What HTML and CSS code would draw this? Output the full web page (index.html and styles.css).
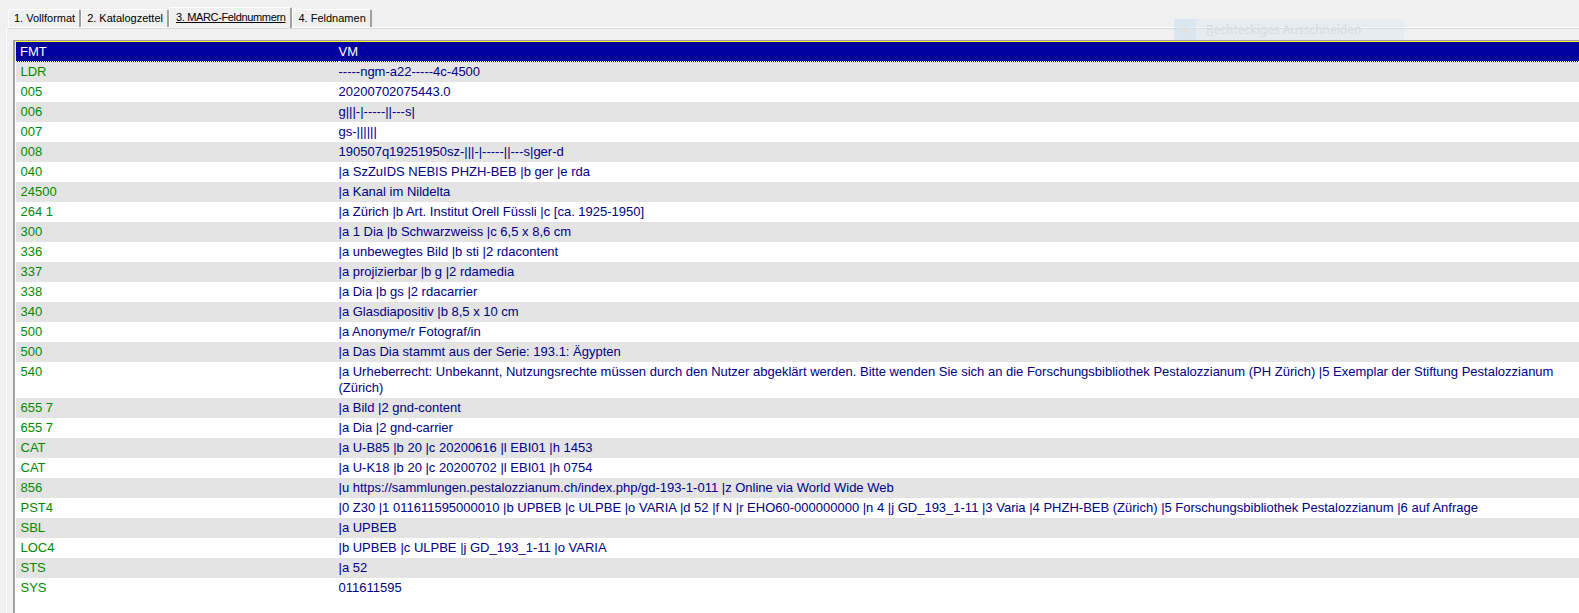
FILE: index.html
```html
<!DOCTYPE html>
<html>
<head>
<meta charset="utf-8">
<link rel="stylesheet" href="styles.css">
</head>
<body>
<div class="tabs">
  <div class="tab">1. Vollformat</div>
  <div class="tab">2. Katalogzettel</div>
  <div class="tab active"><span class="focus">3. MARC-Feldnummern</span></div>
  <div class="tab">4. Feldnamen</div>
</div>
<div class="panel">
  <div class="grid">
    <table class="marc">
      <thead>
        <tr class="head"><th class="c1">FMT</th><th class="c2">VM</th></tr>
      </thead>
      <tbody>
        <tr><td class="c1">LDR</td><td class="c2">-----ngm-a22-----4c-4500</td></tr>
        <tr><td class="c1">005</td><td class="c2">20200702075443.0</td></tr>
        <tr><td class="c1">006</td><td class="c2">g|||-|-----||---s|</td></tr>
        <tr><td class="c1">007</td><td class="c2">gs-||||||</td></tr>
        <tr><td class="c1">008</td><td class="c2">190507q19251950sz-|||-|-----||---s|ger-d</td></tr>
        <tr><td class="c1">040</td><td class="c2">|a SzZuIDS NEBIS PHZH-BEB |b ger |e rda</td></tr>
        <tr><td class="c1">24500</td><td class="c2">|a Kanal im Nildelta</td></tr>
        <tr><td class="c1">264 1</td><td class="c2">|a Zürich |b Art. Institut Orell Füssli |c [ca. 1925-1950]</td></tr>
        <tr><td class="c1">300</td><td class="c2">|a 1 Dia |b Schwarzweiss |c 6,5 x 8,6 cm</td></tr>
        <tr><td class="c1">336</td><td class="c2">|a unbewegtes Bild |b sti |2 rdacontent</td></tr>
        <tr><td class="c1">337</td><td class="c2">|a projizierbar |b g |2 rdamedia</td></tr>
        <tr><td class="c1">338</td><td class="c2">|a Dia |b gs |2 rdacarrier</td></tr>
        <tr><td class="c1">340</td><td class="c2">|a Glasdiapositiv |b 8,5 x 10 cm</td></tr>
        <tr><td class="c1">500</td><td class="c2">|a Anonyme/r Fotograf/in</td></tr>
        <tr><td class="c1">500</td><td class="c2">|a Das Dia stammt aus der Serie: 193.1: Ägypten</td></tr>
        <tr><td class="c1">540</td><td class="c2 wrap">|a Urheberrecht: Unbekannt, Nutzungsrechte müssen durch den Nutzer abgeklärt werden. Bitte wenden Sie sich an die Forschungsbibliothek Pestalozzianum (PH Zürich) |5 Exemplar der Stiftung Pestalozzianum<br>(Zürich)</td></tr>
        <tr><td class="c1">655 7</td><td class="c2">|a Bild |2 gnd-content</td></tr>
        <tr><td class="c1">655 7</td><td class="c2">|a Dia |2 gnd-carrier</td></tr>
        <tr><td class="c1">CAT</td><td class="c2">|a U-B85 |b 20 |c 20200616 |l EBI01 |h 1453</td></tr>
        <tr><td class="c1">CAT</td><td class="c2">|a U-K18 |b 20 |c 20200702 |l EBI01 |h 0754</td></tr>
        <tr><td class="c1">856</td><td class="c2">|u https://sammlungen.pestalozzianum.ch/index.php/gd-193-1-011 |z Online via World Wide Web</td></tr>
        <tr><td class="c1">PST4</td><td class="c2">|0 Z30 |1 011611595000010 |b UPBEB |c ULPBE |o VARIA |d 52 |f N |r EHO60-000000000 |n 4 |j GD_193_1-11 |3 Varia |4 PHZH-BEB (Zürich) |5 Forschungsbibliothek Pestalozzianum |6 auf Anfrage</td></tr>
        <tr><td class="c1">SBL</td><td class="c2">|a UPBEB</td></tr>
        <tr><td class="c1">LOC4</td><td class="c2">|b UPBEB |c ULPBE |j GD_193_1-11 |o VARIA</td></tr>
        <tr><td class="c1">STS</td><td class="c2">|a 52</td></tr>
        <tr><td class="c1">SYS</td><td class="c2">011611595</td></tr>
      </tbody>
    </table>
  </div>
</div>
<div class="ghost"><span class="ghost-icon"><span class="dot"></span></span><span class="ghost-text"><u>R</u>echteckiges Ausschneiden</span></div>
</body>
</html>
```
FILE: styles.css
```css
html, body {
  margin: 0;
  padding: 0;
  height: 613px;
  overflow: hidden;
  background: #f0f0f0;
}
body {
  font-family: "Liberation Sans", Arial, sans-serif;
  position: relative;
}
.tabs {
  display: flex;
  align-items: flex-end;
  padding-left: 8px;
  padding-top: 7px;
  height: 20px;
}
.tab {
  box-sizing: border-box;
  height: 18px;
  padding: 0 4px 0 5px;
  font-size: 11px;
  line-height: 16px;
  color: #000;
  border-top: 1px solid #fff;
  border-left: 1px solid #fff;
  border-right: 2px solid #a0a0a0;
  border-top-left-radius: 2px;
  border-top-right-radius: 2px;
  background: #f0f0f0;
}
.tab.active {
  height: 21px;
  margin-bottom: -1px;
  padding: 1px 5px 0 6px;
  letter-spacing: -0.35px;
  position: relative;
  z-index: 1;
}
.focus {
  text-decoration: underline;
}
.panel {
  margin-left: 6px;
  border-top: 1px solid #fff;
  border-left: 1px solid #fff;
  box-shadow: inset 0 1px 0 #dadada;
  padding: 12px 0 0 6px;
  height: 600px;
}
.grid {
  border-left: 2px solid #a0a0a0;
  border-top: 1px solid #a0a0a0;
  background: #fff;
  height: 600px;
}
.marc {
  border-collapse: collapse;
  width: 100%;
  font-size: 13px;
}
.marc th, .marc td {
  padding: 2px 0 2px 0;
  line-height: 16px;
  text-align: left;
  vertical-align: top;
  white-space: nowrap;
  font-weight: normal;
}
.marc .c1 {
  width: 318px;
  padding-left: 5px;
}
.marc td.c1 {
  color: #008c00;
}
.marc td.c2 {
  color: #000088;
}
.head th {
  background: #0000a0;
  color: #fff;
  height: 17px;
  padding-top: 2px;
  padding-bottom: 1px;
  box-sizing: border-box;
  border-top: 1px dotted #ffff00;
  border-bottom: 1px dotted #ffffff;
}
.head th.c1 {
  border-left: 1px dotted #ffff00;
  padding-left: 4px;
}
.marc tbody tr:nth-child(odd) td {
  background: #e4e4e4;
}
.marc tbody tr:nth-child(even) td {
  background: #ffffff;
}
.ghost {
  position: absolute;
  left: 1174px;
  top: 19px;
  width: 230px;
  height: 21px;
  display: flex;
  background: rgba(215, 228, 240, 0.35);
}
.ghost-icon {
  width: 22px;
  height: 21px;
  background: rgba(200, 220, 240, 0.35);
  display: flex;
  align-items: center;
  justify-content: center;
}
.dot {
  width: 6px;
  height: 6px;
  border-radius: 50%;
  background: #e0e0e0;
}
.ghost-text {
  padding-left: 10px;
  font-family: "Noto Sans", sans-serif;
  font-size: 12px;
  line-height: 21px;
  color: #d8dade;
}
```
